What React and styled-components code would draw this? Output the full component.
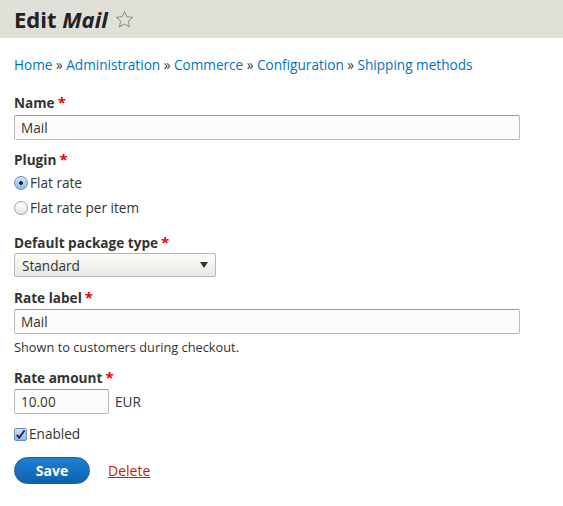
import React from 'react';
import styled, { createGlobalStyle } from 'styled-components';

const GlobalStyle = createGlobalStyle`
  body {
    margin: 0;
    background: #fff;
    color: #333;
    font-family: "Open Sans", "DejaVu Sans", sans-serif;
    font-size: 13.6px;
  }
`;

const crumbs = ['Home', 'Administration', 'Commerce', 'Configuration', 'Shipping methods'];

const App = () => {
  return (
    <>
      <GlobalStyle />
      <Header>
        <Title>
          Edit <em>Mail</em>
        </Title>
        <Star viewBox="0 0 20 20">
          <path d="M10 1.5l2.5 5.6 6.1.6-4.6 4.1 1.3 6-5.3-3.1-5.3 3.1 1.3-6-4.6-4.1 6.1-.6z" />
        </Star>
      </Header>
      <Page>
        <Breadcrumb>
          {crumbs.map((c, i) => (
            <span key={c}>
              <Link href="#">{c}</Link>
              {i < crumbs.length - 1 && ' » '}
            </span>
          ))}
        </Breadcrumb>

        <Field>
          <Label>
            Name<Required>*</Required>
          </Label>
          <TextInput defaultValue="Mail" width={506} />
        </Field>

        <Field space={16}>
          <Label>
            Plugin<Required>*</Required>
          </Label>
          <Options>
            <Option>
              <Radio checked />
              Flat rate
            </Option>
            <Option>
              <Radio />
              Flat rate per item
            </Option>
          </Options>
        </Field>

        <Field space={11}>
          <Label gap={1}>
            Default package type<Required>*</Required>
          </Label>
          <Select>
            Standard
            <Caret />
          </Select>
        </Field>

        <Field space={12}>
          <Label gap={2}>
            Rate label<Required>*</Required>
          </Label>
          <TextInput defaultValue="Mail" width={506} />
          <Description>Shown to customers during checkout.</Description>
        </Field>

        <Field space={11}>
          <Label gap={2}>
            Rate amount<Required>*</Required>
          </Label>
          <Inline>
            <TextInput defaultValue="10.00" width={95} />
            <span>EUR</span>
          </Inline>
        </Field>

        <Option>
          <Checkbox>
            <svg viewBox="0 0 12 12" width="11" height="11">
              <path d="M2 6.5l2.5 3L10.5 1.5" fill="none" stroke="#1a2a44" strokeWidth="2" />
            </svg>
          </Checkbox>
          Enabled
        </Option>

        <Actions>
          <Button>Save</Button>
          <DeleteLink href="#">Delete</DeleteLink>
        </Actions>
      </Page>
    </>
  );
};

export default App;

const Header = styled.div`
  background: #e0e0d8;
  height: 38px;
  padding: 0 14px;
  display: flex;
  align-items: center;
  gap: 7px;
`;

const Title = styled.h1`
  margin: 0;
  font-size: 22px;
  font-weight: bold;
  color: #222;
  em {
    font-style: italic;
  }
`;

const Star = styled.svg`
  width: 19px;
  height: 19px;
  fill: none;
  stroke: #8a8670;
  stroke-width: 1;
`;

const Page = styled.div`
  padding: 18px 14px;
`;

const Breadcrumb = styled.div`
  line-height: 18px;
  margin-bottom: 19px;
`;

const Link = styled.a`
  color: #0074bd;
  text-decoration: none;
`;

const Field = styled.div`
  margin-bottom: ${(p) => p.space || 10}px;
`;

const Label = styled.div`
  font-weight: bold;
  line-height: 18px;
  margin-bottom: ${(p) => (p.gap !== undefined ? p.gap : 3)}px;
`;

const Required = styled.span`
  color: #e00;
  margin-left: 3px;
  font-size: 15px;
`;

const TextInput = styled.input`
  box-sizing: border-box;
  width: ${(p) => p.width}px;
  height: 25px;
  border: 1px solid #b8b8b8;
  border-top-color: #999;
  border-radius: 2px;
  background: #fcfcfa;
  font: inherit;
  color: #333;
  padding: 0 6px;
  display: block;
`;

const Options = styled.div`
  display: flex;
  flex-direction: column;
  gap: 7px;
  padding-top: 2px;
`;

const Option = styled.label`
  display: flex;
  align-items: center;
  gap: 2px;
  line-height: 18px;
`;

const Radio = styled.span`
  box-sizing: border-box;
  width: 14px;
  height: 14px;
  border-radius: 50%;
  border: 1px solid ${(p) => (p.checked ? '#6a8fc4' : '#a0a0a0')};
  background: ${(p) =>
    p.checked
      ? 'radial-gradient(circle, #222 0 1.6px, transparent 2px), linear-gradient(#d3e4fa, #8fb7ec)'
      : 'linear-gradient(#fff, #e6e6e6)'};
`;

const Checkbox = styled.span`
  box-sizing: border-box;
  width: 13px;
  height: 13px;
  border-radius: 2px;
  border: 1px solid #6a8fc4;
  background: linear-gradient(#d3e4fa, #8fb7ec);
  display: flex;
  align-items: center;
  justify-content: center;
`;

const Select = styled.div`
  box-sizing: border-box;
  width: 202px;
  height: 24px;
  border: 1px solid #b8b8b8;
  border-radius: 2px;
  background: linear-gradient(#fbfbf8, #e9e9e3);
  display: flex;
  align-items: center;
  justify-content: space-between;
  padding: 0 7px;
`;

const Caret = styled.span`
  width: 0;
  height: 0;
  border-left: 4px solid transparent;
  border-right: 4px solid transparent;
  border-top: 6px solid #333;
`;

const Description = styled.div`
  margin-top: 4px;
  font-size: 12.8px;
  line-height: 18px;
`;

const Inline = styled.div`
  display: flex;
  align-items: center;
  gap: 6px;
`;

const Actions = styled.div`
  display: flex;
  align-items: center;
  gap: 18px;
  margin-top: 14px;
`;

const Button = styled.button`
  height: 27px;
  width: 76px;
  border-radius: 14px;
  border: 1px solid #1e5c90;
  background: linear-gradient(#1d7fd1, #0e62b0);
  color: #fff;
  font: inherit;
  font-weight: bold;
  font-size: 14px;
`;

const DeleteLink = styled.a`
  color: #c72100;
  text-decoration: underline;
  font-size: 14px;
`;
